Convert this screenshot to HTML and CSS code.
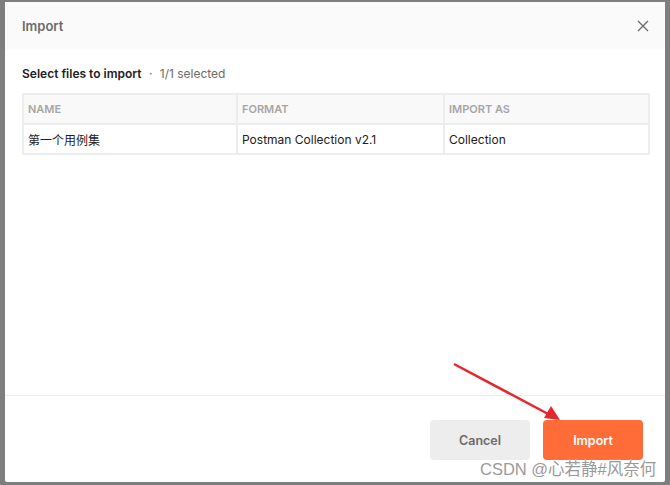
FILE: index.html
```html
<!DOCTYPE html>
<html lang="en">
<head>
    <meta charset="UTF-8">
    <title>Import</title>
    <link rel="stylesheet" href="styles.css">
</head>
<body>
    <div class="backdrop">
        <div class="dialog">
            <div class="dialog-header">
                <span class="dialog-title">Import</span>
                <span class="close">
                    <svg width="12" height="12" viewBox="0 0 12 12">
                        <path d="M1 1L11 11M11 1L1 11" stroke="#6b6b6b" stroke-width="1.3" fill="none"/>
                    </svg>
                </span>
            </div>
            <div class="dialog-body">
                <div class="summary">
                    <b>Select files to import</b>
                    <span class="dot">&middot;</span>
                    <span class="muted">1/1 selected</span>
                </div>
                <table class="files">
                    <thead>
                        <tr>
                            <th class="col-name">Name</th>
                            <th class="col-format">Format</th>
                            <th>Import as</th>
                        </tr>
                    </thead>
                    <tbody>
                        <tr>
                            <td>第一个用例集</td>
                            <td>Postman Collection v2.1</td>
                            <td>Collection</td>
                        </tr>
                    </tbody>
                </table>
            </div>
            <div class="dialog-footer">
                <button class="btn btn-cancel">Cancel</button>
                <button class="btn btn-import">Import</button>
            </div>

            <!-- 截图上的红色箭头 -->
            <svg class="arrow" width="130" height="70" viewBox="0 0 130 70">
                <path d="M4 4L100 55" stroke="#e8242c" stroke-width="2.5" fill="none"/>
                <path d="M110 60L94 58L101 46Z" fill="#e8242c"/>
            </svg>
            <div class="watermark">CSDN @心若静#风奈何</div>
        </div>
    </div>
</body>
</html>
```

FILE: styles.css
```css
* {
    margin: 0;
    padding: 0;
    box-sizing: border-box;
}
body {
    background: #7e7e7e;
    font-family: Inter, "Noto Sans CJK SC", sans-serif;
    width: 670px;
    height: 485px;
    overflow: hidden;
}
.backdrop {
    padding: 2px 5px 0 5px;
}
.dialog {
    width: 660px;
    height: 480px;
    background: #fff;
    display: flex;
    flex-direction: column;
    position: relative;
    border-radius: 2px;
}
.dialog-header {
    height: 47px;
    background: #fafafa;
    display: flex;
    align-items: center;
    justify-content: space-between;
    padding: 0 16px 0 17px;
}
.dialog-title {
    font-size: 13px;
    font-weight: 600;
    color: #6b6b6b;
}
.close {
    display: flex;
    width: 12px;
    height: 12px;
}
.dialog-body {
    flex: 1;
    padding: 17px 15px 0 17px;
}
.summary {
    font-size: 12px;
    color: #212121;
    line-height: 16px;
    margin-bottom: 11px;
}
.summary b {
    font-weight: 600;
}
.dot {
    color: #6b6b6b;
    margin: 0 4px;
}
.muted {
    color: #6b6b6b;
}
.files {
    width: 628px;
    border-collapse: collapse;
    border: 2px solid #ededed;
    font-size: 12px;
}
.files th,
.files td {
    border: 2px solid #ededed;
    text-align: left;
    padding: 0 4px;
    height: 30px;
}
.files th {
    background: #f9f9f9;
    color: #a6a6a6;
    font-size: 11px;
    font-weight: 600;
    text-transform: uppercase;
}
.files td {
    color: #212121;
}
.col-name {
    width: 214px;
}
.col-format {
    width: 207px;
}
.dialog-footer {
    height: 87px;
    border-top: 1px solid #ededed;
    display: flex;
    justify-content: flex-end;
    align-items: flex-start;
    gap: 13px;
    padding: 24px 22px 0 0;
}
.btn {
    width: 100px;
    height: 40px;
    border: none;
    border-radius: 4px;
    font-family: Inter, sans-serif;
    font-size: 12.5px;
    font-weight: 600;
}
.btn-cancel {
    background: #ededed;
    color: #6b6b6b;
}
.btn-import {
    background: #ff6c37;
    color: #fff;
}
.arrow {
    position: absolute;
    left: 445px;
    top: 358px;
}
.watermark {
    position: absolute;
    left: 475px;
    top: 454px;
    font-family: "Liberation Sans", "Noto Sans CJK SC", sans-serif;
    font-size: 16.5px;
    color: #9a9a9a;
    text-shadow: 0 0 2px #fff, 0 0 2px #fff;
}
```
